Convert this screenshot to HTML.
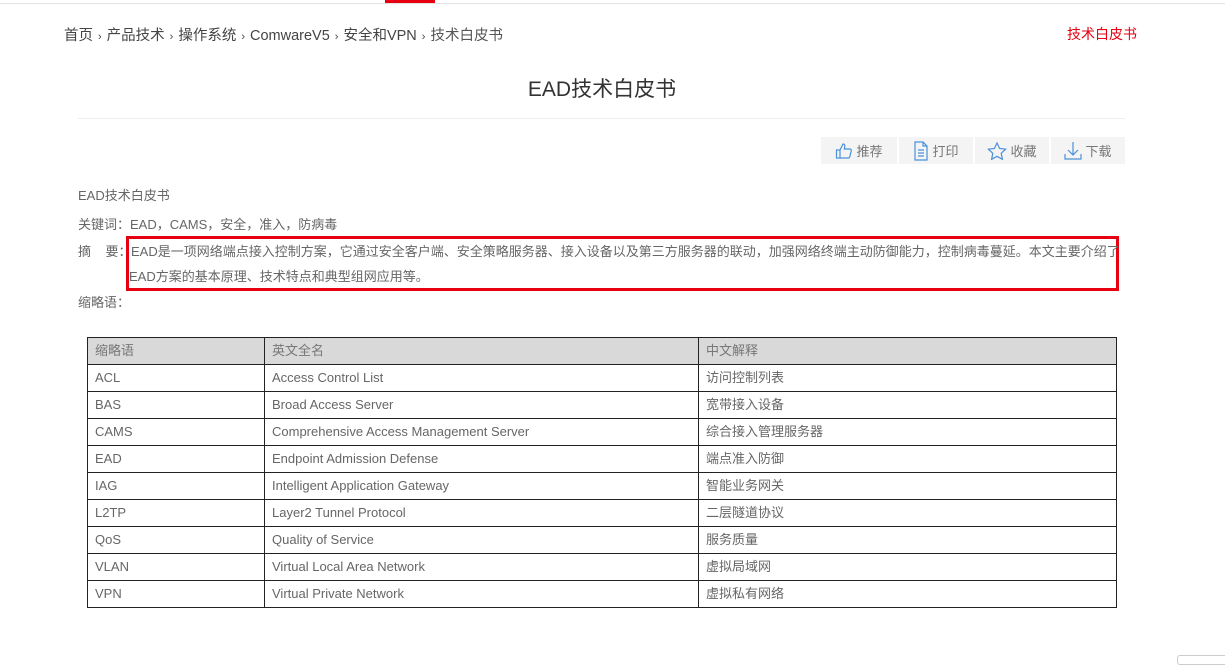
<!DOCTYPE html>
<html><head><meta charset="utf-8"><style>
*{margin:0;padding:0;box-sizing:border-box}
body{width:1225px;height:659px;background:#fff;position:relative;overflow:hidden;font-family:"Liberation Sans","Noto Sans CJK SC",sans-serif;color:#666}
.a{position:absolute;white-space:nowrap}
.s{font-size:11px;margin:0 5px}
table{position:absolute;left:87px;top:337px;width:1030px;border-collapse:collapse;font-size:13px;color:#666}
td{border:1px solid #222;height:27px;padding:0 7px;vertical-align:middle;line-height:14px}
tr.h td{background:#d9d9d9;color:#777}
.btn{position:absolute;top:137px;height:27px;background:#f4f4f4;font-size:13px;color:#777;display:flex;align-items:center;justify-content:center;gap:3px}
</style></head><body>
<div class="a" style="left:0;top:3px;width:1225px;height:1px;background:#e2e2e2"></div>
<div class="a" style="left:385px;top:0;width:50px;height:3px;background:#e60012"></div>
<div class="a" style="left:64px;top:24px;font-size:14.5px;color:#444">首页<span class="s">›</span>产品技术<span class="s">›</span>操作系统<span class="s">›</span>ComwareV5<span class="s">›</span>安全和VPN<span class="s">›</span><span style="color:#555">技术白皮书</span></div>
<div class="a" style="left:1067px;top:24px;font-size:14px;color:#e60012">技术白皮书</div>
<div class="a" style="left:0;width:1204px;top:73px;text-align:center;font-size:21px;color:#333">EAD技术白皮书</div>
<div class="a" style="left:78px;top:118px;width:1047px;height:1px;background:#eee"></div>
<div class="btn" style="left:821px;width:76px"><svg width="18" height="18" viewBox="0 0 18 18" fill="none" stroke="#4a90d9" stroke-width="1.2"><rect x="1.5" y="8" width="3.5" height="8"/><path d="M5 8l3-6c1.5 0 2 1 1.8 2.5L9.3 7H15c1 0 1.5 1 1.2 2l-1.5 6c-.2.7-.8 1-1.4 1H5"/></svg>推荐</div>
<div class="btn" style="left:899px;width:74px"><svg width="16" height="20" viewBox="0 0 16 20" fill="none" stroke="#4a90d9" stroke-width="1.2"><path d="M2 1h8l4 4v14H2z M10 1v4h4"/><path d="M5 9h6M5 12h6M5 15h6"/></svg>打印</div>
<div class="btn" style="left:975px;width:74px"><svg width="20" height="18" viewBox="0 0 20 18" fill="none" stroke="#4a90d9" stroke-width="1.2"><path d="M10 1l2.6 5.5 6 .7-4.4 4.1 1.2 6L10 14.3 4.6 17.3l1.2-6L1.4 7.2l6-.7z"/></svg>收藏</div>
<div class="btn" style="left:1051px;width:74px"><svg width="18" height="20" viewBox="0 0 18 20" fill="none" stroke="#4a90d9" stroke-width="1.2"><path d="M9 1v13M4 9l5 5 5-5M1 13v5h16v-5"/></svg>下载</div>
<div class="a" style="left:78px;top:185px;font-size:13px;color:#666">EAD技术白皮书</div>
<div class="a" style="left:78px;top:214px;font-size:13px;color:#666">关键词：EAD，CAMS，安全，准入，防病毒</div>
<div class="a" style="left:78px;top:241px;font-size:13px;color:#666">摘&nbsp;&nbsp;&nbsp;&nbsp;要：</div>
<div class="a" style="left:126px;top:236px;width:993px;height:55px;border:3px solid #e60012"></div>
<div class="a" style="left:131px;top:241px;font-size:13px;color:#666">EAD是一项网络端点接入控制方案，它通过安全客户端、安全策略服务器、接入设备以及第三方服务器的联动，加强网络终端主动防御能力，控制病毒蔓延。本文主要介绍了</div>
<div class="a" style="left:129px;top:266px;font-size:13px;color:#666">EAD方案的基本原理、技术特点和典型组网应用等。</div>
<div class="a" style="left:78px;top:292px;font-size:13px;color:#666">缩略语：</div>
<table>
<colgroup><col style="width:177px"><col style="width:434px"><col></colgroup>
<tr class="h"><td>缩略语</td><td>英文全名</td><td>中文解释</td></tr>
<tr><td>ACL</td><td>Access Control List</td><td>访问控制列表</td></tr>
<tr><td>BAS</td><td>Broad Access Server</td><td>宽带接入设备</td></tr>
<tr><td>CAMS</td><td>Comprehensive Access Management Server</td><td>综合接入管理服务器</td></tr>
<tr><td>EAD</td><td>Endpoint Admission Defense</td><td>端点准入防御</td></tr>
<tr><td>IAG</td><td>Intelligent Application Gateway</td><td>智能业务网关</td></tr>
<tr><td>L2TP</td><td>Layer2 Tunnel Protocol</td><td>二层隧道协议</td></tr>
<tr><td>QoS</td><td>Quality of Service</td><td>服务质量</td></tr>
<tr><td>VLAN</td><td>Virtual Local Area Network</td><td>虚拟局域网</td></tr>
<tr><td>VPN</td><td>Virtual Private Network</td><td>虚拟私有网络</td></tr>
</table>
<div class="a" style="left:1177px;top:655px;width:60px;height:10px;border:1px solid #ccc;border-radius:3px"></div>
</body></html>
